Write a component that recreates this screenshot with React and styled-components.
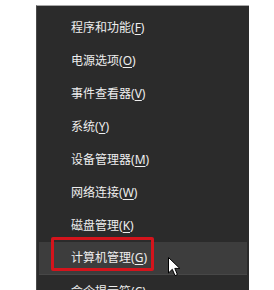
import styled, { createGlobalStyle } from "styled-components";

const GlobalStyle = createGlobalStyle`
  html, body {
    margin: 0;
    padding: 0;
    background: #ffffff;
    overflow: hidden;
  }
  body {
    font-family: "Noto Sans", "Noto Sans CJK SC", sans-serif;
  }
`;

const items = [
  { label: "程序和功能", key: "F" },
  { label: "电源选项", key: "O" },
  { label: "事件查看器", key: "V" },
  { label: "系统", key: "Y" },
  { label: "设备管理器", key: "M" },
  { label: "网络连接", key: "W" },
  { label: "磁盘管理", key: "K" },
  { label: "计算机管理", key: "G", active: true },
  { label: "命令提示符", key: "C" },
];

export default function App() {
  return (
    <>
      <GlobalStyle />
      <Page>
        <Menu>
          {items.map((item) => (
            <Row key={item.key} $active={item.active}>
              <Label>
                {item.label}(<Key>{item.key}</Key>)
              </Label>
              {item.active && (
                <>
                  <Marker />
                  <Cursor viewBox="0 0 12 20" width="12" height="20">
                    <path
                      d="M0.5 0.5 L0.5 16 L4.3 12.3 L7 18.6 L9.4 17.6 L6.8 11.4 L11.8 11.4 Z"
                      fill="#ffffff"
                      stroke="#000000"
                      strokeWidth="1"
                    />
                  </Cursor>
                </>
              )}
            </Row>
          ))}
        </Menu>
      </Page>
    </>
  );
}

const Page = styled.div`
  width: 274px;
  height: 290px;
  padding-top: 5px;
  padding-left: 36px;
  box-sizing: border-box;
  background: #ffffff;
  overflow: hidden;
`;

const Menu = styled.div`
  width: 213px;
  height: 290px;
  background: #2b2b2b;
  border-top: 1px solid #a8a8a8;
  border-left: 1px solid #4a4a4a;
  box-sizing: border-box;
  padding: 5px 2px 0 2px;
  display: flex;
  flex-direction: column;
`;

const Row = styled.div`
  position: relative;
  height: 33px;
  flex-shrink: 0;
  display: flex;
  align-items: center;
  padding-left: 32px;
  background: ${(p) => (p.$active ? "#3d3d3d" : "transparent")};
  border-bottom: ${(p) => (p.$active ? "1px solid #474747" : "0")};
  box-sizing: border-box;
`;

const Label = styled.span`
  font-size: 12px;
  line-height: 14px;
  color: #eeeeee;
  white-space: nowrap;
`;

const Key = styled.span`
  text-decoration: underline;
  text-underline-offset: 2px;
`;

const Marker = styled.div`
  position: absolute;
  left: 12px;
  top: -5px;
  width: 103px;
  height: 34px;
  border: 3px solid #d4141c;
  border-radius: 2px;
  box-sizing: border-box;
  pointer-events: none;
`;

const Cursor = styled.svg`
  position: absolute;
  left: 129px;
  top: 15px;
`;
